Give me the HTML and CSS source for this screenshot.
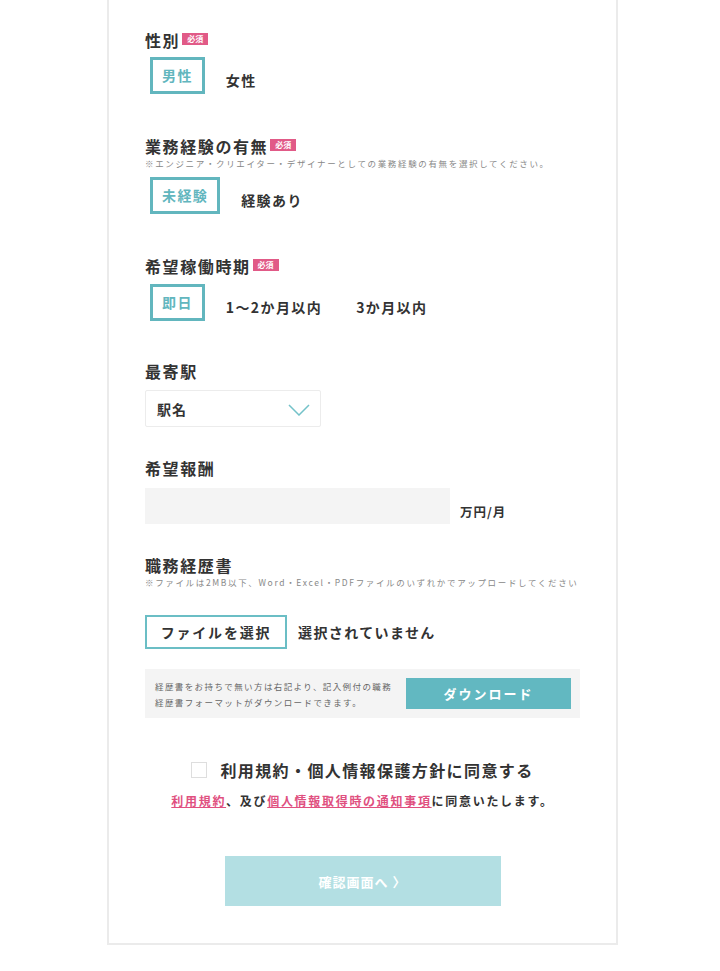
FILE: index.html
```html
<!DOCTYPE html>
<html lang="ja">
<head>
<meta charset="utf-8">
<title>エントリーフォーム</title>
<link rel="stylesheet" href="styles.css">
</head>
<body>
<div class="page">
  <form class="card">
    <div class="field f1">
      <div class="label">性別<span class="req">必須</span></div>
      <div class="opts">
        <span class="opt on">男性</span>
        <span class="opt">女性</span>
      </div>
    </div>

    <div class="field f2">
      <div class="label">業務経験の有無<span class="req">必須</span></div>
      <p class="note">※エンジニア・クリエイター・デザイナーとしての業務経験の有無を選択してください。</p>
      <div class="opts">
        <span class="opt on">未経験</span>
        <span class="opt">経験あり</span>
      </div>
    </div>

    <div class="field f3">
      <div class="label">希望稼働時期<span class="req">必須</span></div>
      <div class="opts">
        <span class="opt on">即日</span>
        <span class="opt">1〜2か月以内</span>
        <span class="opt">3か月以内</span>
      </div>
    </div>

    <div class="field f4">
      <div class="label">最寄駅</div>
      <div class="select">
        <span>駅名</span>
        <svg class="chev" width="22" height="12" viewBox="0 0 22 12"><polyline points="1,1 11,11 21,1" fill="none" stroke="#74c2c9" stroke-width="1.5"/></svg>
      </div>
    </div>

    <div class="field f5">
      <div class="label">希望報酬</div>
      <div class="pay">
        <div class="input"></div>
        <span class="unit">万円/月</span>
      </div>
    </div>

    <div class="field f6">
      <div class="label">職務経歴書</div>
      <p class="note">※ファイルは2MB以下、Word・Excel・PDFファイルのいずれかでアップロードしてください</p>
      <div class="file">
        <span class="filebtn">ファイルを選択</span>
        <span class="filename">選択されていません</span>
      </div>
      <div class="dl">
        <p class="dltext">経歴書をお持ちで無い方は右記より、記入例付の職務<br>経歴書フォーマットがダウンロードできます。</p>
        <span class="dlbtn">ダウンロード</span>
      </div>
    </div>

    <div class="agree">
      <span class="check"></span>
      <span class="agreetext">利用規約・個人情報保護方針に同意する</span>
    </div>
    <p class="terms"><a href="#">利用規約</a>、及び<a href="#">個人情報取得時の通知事項</a>に同意いたします。</p>

    <div class="submitrow">
      <span class="submit">確認画面へ 〉</span>
    </div>
  </form>
</div>
</body>
</html>
```

FILE: styles.css
```css
* { box-sizing: border-box; }
html, body { margin: 0; padding: 0; background: #fff; }
body {
  font-family: "Noto Sans CJK JP", "Noto Sans", "Liberation Sans", sans-serif;
  color: #333;
}
.page {
  padding-left: 107px;
  width: 618px;
}
.card {
  width: 511px;
  border: 2px solid #ebebeb;
  border-top: 0;
  padding: 28px 36px 37px 36px;
  display: flex;
  flex-direction: column;
}
.field { display: flex; flex-direction: column; }
.label {
  font-size: 16px;
  line-height: 24px;
  font-weight: 700;
  letter-spacing: 1.6px;
  color: #333;
  display: flex;
  align-items: center;
}
.req {
  display: inline-block;
  background: #e15a87;
  color: #fff;
  font-size: 8px;
  line-height: 12px;
  height: 12px;
  width: 26px;
  text-align: center;
  letter-spacing: 0;
  font-weight: 700;
  margin-left: 2px;
  margin-top: -2px;
}
.note {
  margin: -1px 0 0;
  font-size: 8.5px;
  line-height: 12px;
  letter-spacing: 1.65px;
  color: #888;
  white-space: nowrap;
}
.opts {
  display: flex;
  align-items: flex-start;
  gap: 8px;
  margin-left: 5px;
  height: 37px;
}
.opt {
  font-size: 14px;
  font-weight: 700;
  letter-spacing: 1.4px;
  line-height: 31px;
  border: 3px solid transparent;
  padding: 5px 10px 0;
  color: #333;
}
.opt.on {
  border-color: #62b6be;
  color: #62b6be;
  padding: 0 9px;
}
.f1 .opts { margin-top: 5px; }
.f2 { margin-top: 40px; }
.f2 .opts { margin-top: 8px; }
.f3 { margin-top: 40px; }
.f3 .opts { margin-top: 6px; }
.f4 { margin-top: 38px; }
.f5 { margin-top: 29px; }
.f6 { margin-top: 29px; }

.select {
  margin-top: 7px;
  width: 176px;
  height: 37px;
  border: 1px solid #ececec;
  border-radius: 2px;
  display: flex;
  align-items: center;
  justify-content: space-between;
  padding: 0 10px 0 11px;
  font-size: 14px;
  font-weight: 700;
  color: #333;
  letter-spacing: 1px;
}
.chev { margin-top: 2px; }

.pay {
  margin-top: 8px;
  display: flex;
  align-items: flex-end;
  gap: 10px;
}
.input {
  width: 305px;
  height: 36px;
  background: #f4f4f4;
}
.unit {
  font-size: 12.5px;
  font-weight: 700;
  letter-spacing: 1px;
  line-height: 16px;
  margin-bottom: 4px;
}

.file {
  margin-top: 27px;
  display: flex;
  align-items: center;
  gap: 11px;
}
.filebtn {
  width: 142px;
  height: 34px;
  border: 2px solid #6bbec5;
  display: flex;
  align-items: center;
  justify-content: center;
  font-size: 14px;
  font-weight: 700;
  letter-spacing: 1.8px;
  color: #333;
}
.filename {
  font-size: 14px;
  font-weight: 700;
  letter-spacing: 1.4px;
  color: #333;
}
.dl {
  margin-top: 20px;
  height: 49px;
  background: #f4f4f4;
  display: flex;
  align-items: center;
  justify-content: space-between;
  padding: 0 9px 0 10px;
}
.dltext {
  margin: 0;
  font-size: 8.5px;
  line-height: 16px;
  letter-spacing: 1.4px;
  color: #666;
}
.dlbtn {
  width: 165px;
  height: 31px;
  background: #62b8c1;
  color: #fff;
  font-size: 13px;
  font-weight: 700;
  letter-spacing: 2px;
  display: flex;
  align-items: center;
  justify-content: center;
}

.agree {
  margin-top: 40px;
  display: flex;
  align-items: center;
  justify-content: center;
  gap: 13px;
}
.check {
  width: 16px;
  height: 16px;
  border: 1px solid #dedede;
  background: #fff;
}
.agreetext {
  font-size: 16px;
  line-height: 24px;
  font-weight: 700;
  letter-spacing: 1.4px;
  color: #333;
}
.terms {
  margin: 9px 0 0;
  text-align: center;
  font-size: 12px;
  line-height: 20px;
  font-weight: 700;
  letter-spacing: 1.7px;
  color: #333;
}
.terms a { color: #e0507f; text-decoration: underline; }

.submitrow {
  margin-top: 45px;
  display: flex;
  justify-content: center;
}
.submit {
  width: 276px;
  height: 50px;
  background: #b3dfe3;
  color: #fff;
  font-size: 13px;
  font-weight: 700;
  letter-spacing: 1px;
  display: flex;
  align-items: center;
  justify-content: center;
}
```
